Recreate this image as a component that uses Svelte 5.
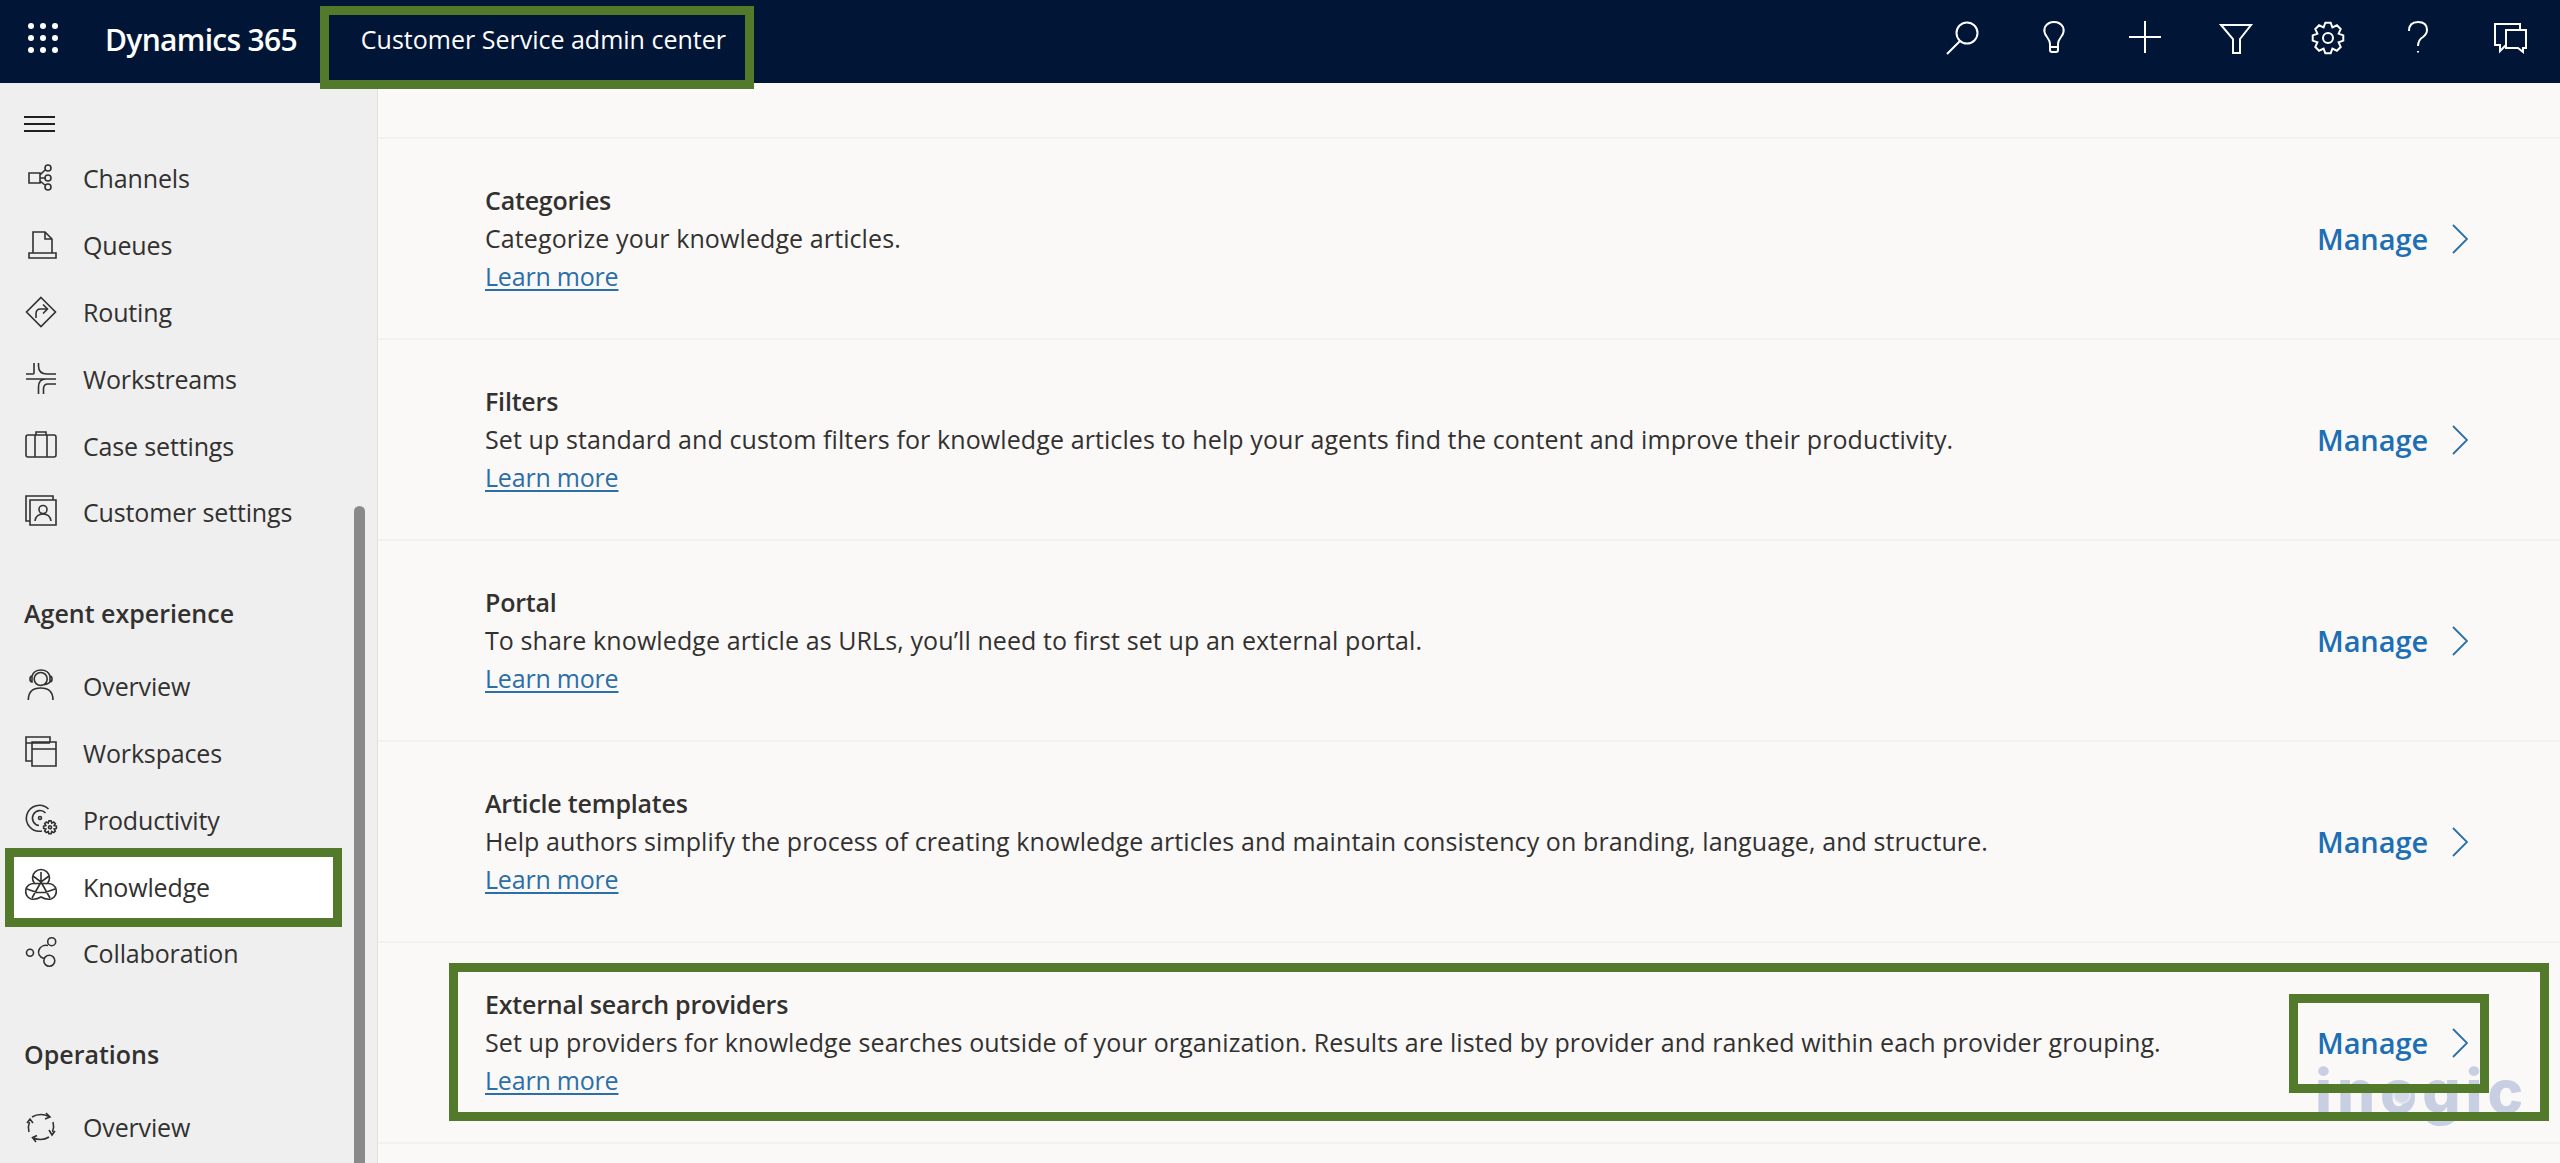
<script>
	const c = (x, y, r) => `M${x - r} ${y}a${r} ${r} 0 1 0 ${2 * r} 0a${r} ${r} 0 1 0 ${-2 * r} 0z`;
	const box = (x, y, w, h) => `M${x} ${y}h${w}v${h}h${-w}z`;

	function gear(cx, cy, ro, ri, n) {
		let d = '';
		const step = (Math.PI * 2) / n;
		for (let i = 0; i < n; i++) {
			const a = i * step;
			const pts = [
				[ri, a - step * 0.5],
				[ro, a - step * 0.22],
				[ro, a + step * 0.22]
			];
			for (const [r, t] of pts) {
				d += `${d ? 'L' : 'M'}${(cx + r * Math.cos(t)).toFixed(2)} ${(cy + r * Math.sin(t)).toFixed(2)}`;
			}
		}
		return d + 'z';
	}

	const nav = {
		channels:
			box(4, 11, 11, 10) + c(23, 6, 3) + c(23, 16, 3) + c(23, 25, 3) + 'M15 13L20.5 7.5M15 16H20M15 19L20.5 23.5',
		queues: 'M8 24V3H20L27 10V24M20 3V10H27' + box(4, 24, 27, 5),
		routing: 'M16 1.5L30.5 16L16 30.5L1.5 16zM11 22V18Q11 13 15.5 13H22M18 8.5L22.5 13L18 17.5',
		workstreams:
			'M1 11H8Q9 11 9 10V0M13.5 0V3Q13.5 11 22 11H31M1 16H31M13.5 31V24Q13.5 16 21 16M18.5 31V26Q18.5 21 23 21H31',
		case: 'M3 5H29Q31 5 31 7V25Q31 27 29 27H3Q1 27 1 25V7Q1 5 3 5zM10 5V27M22 5V27M11 5V2H21V5',
		customer:
			'M5 25H1V0H28V4' + box(5, 4, 26, 25) + c(18, 13.5, 4) + 'M10 25Q11 18 18 18Q25 18 26 25',
		agent:
			c(15.7, 9, 6.5) +
			'M3.3 30Q3.3 18 15.7 18Q28 18 28 30M7 6V12Q5 12 5 9Q5 6 7 6Q9 0 16 0Q23 0 25 6V12Q27 12 27 9Q27 6 25 6M25 12Q22 15 16 15',
		workspaces: 'M7 24H1V0H25V5M1 6H25' + box(7, 5, 24, 24) + 'M7 12H31',
		productivity:
			'M23.5 5A13 13 0 1 0 17 27M20.5 9A7.5 7.5 0 1 0 14 21.5' +
			c(15, 14, 1.5) +
			gear(25, 23.3, 6.5, 4.5, 8) +
			c(25, 23.3, 1.5),
		knowledge:
			'M9.5 12.5A8.5 8.5 0 1 1 22.5 12.5A8 8 0 0 1 26 28Q21 29 16 26Q11 29 6 28A8 8 0 0 1 9.5 12.5z' +
			'M16 1V11M8 5L16 11L24 5M9.5 12.5H22.5M16 11L7 27M16 11L25 27M2 18L12 21.5M30 18L20 21.5M11 21.5H21',
		collab: c(5, 15.7, 3.5) + c(26.7, 4.7, 4) + c(24.3, 23.7, 5.5) + 'M23 8.5C14 7 9 18 19 21.5',
		ops: 'M7 6Q11 3.5 16 3.5Q20 3.5 24 5.5M21 2L25 6L20 8M28 11Q29.5 16 27.5 21M24 19L27 24L30 20M24 26Q20 28.5 15.7 28.5Q11 28.5 9 27M12 24.5L7.5 26.5L11 31M4 21Q2.5 16 4.5 11M2 12L5 8L8 12'
	};

	const groups = [
		{
			items: [
				['Channels', 'channels'],
				['Queues', 'queues'],
				['Routing', 'routing'],
				['Workstreams', 'workstreams'],
				['Case settings', 'case'],
				['Customer settings', 'customer']
			]
		},
		{
			title: 'Agent experience',
			items: [
				['Overview', 'agent'],
				['Workspaces', 'workspaces'],
				['Productivity', 'productivity'],
				['Knowledge', 'knowledge'],
				['Collaboration', 'collab']
			]
		},
		{ title: 'Operations', items: [['Overview', 'ops']] }
	];

	const top = [
		c(20, 12, 10.5) + 'M13 20L0 33',
		'M12 26V23Q12 20 9 16Q5 11 7 6Q10 1 16 1Q22 1 25 6Q27 11 23 16Q20 20 20 23V26zM12 26V29Q12 31 14 31H18Q20 31 20 29V26',
		'M0 16H32M16 0V32',
		'M1 4H31L20 18V32H13V18z',
		gear(16, 17, 15.5, 11.5, 8) + c(16, 17, 5),
		'M6 10Q6 1 15 1Q24 1 24 9Q24 13 20 16Q15 19 15 25M15 30V31.5',
		'M26 9V3H1V24H6L6 30L12 24M12 9H32V27H29V31L24 27H12z'
	];

	const rows = [
		['Categories', 'Categorize your knowledge articles.'],
		['Filters', 'Set up standard and custom filters for knowledge articles to help your agents find the content and improve their productivity.'],
		['Portal', 'To share knowledge article as URLs, you’ll need to first set up an external portal.'],
		['Article templates', 'Help authors simplify the process of creating knowledge articles and maintain consistency on branding, language, and structure.'],
		['External search providers', 'Set up providers for knowledge searches outside of your organization. Results are listed by provider and ranked within each provider grouping.']
	];
</script>

<div class="page">
	<header class="topbar">
		<div class="waffle">
			{#each Array(9) as _}<i></i>{/each}
		</div>
		<span class="brand">Dynamics 365</span>
		<div class="app-title">
			<span>Customer Service admin center</span>
			<div class="mark"></div>
		</div>
		<div class="actions">
			{#each top as d}
				<span class="action">
					<svg viewBox="0 0 32 34" width="32" height="34"><path {d} /></svg>
				</span>
			{/each}
		</div>
	</header>

	<div class="main">
		<aside class="sidebar">
			<div class="burger"><i></i><i></i><i></i></div>
			{#each groups as group}
				<div class="group">
					{#if group.title}<h3>{group.title}</h3>{/if}
					{#each group.items as [label, icon]}
						<div class="item" class:active={label === 'Knowledge'}>
							{#if label === 'Knowledge'}<div class="mark fill"></div>{/if}
							<svg viewBox="0 0 32 32" width="32" height="32"><path d={nav[icon]} /></svg>
							<span>{label}</span>
						</div>
					{/each}
				</div>
			{/each}
			<div class="thumb"></div>
		</aside>

		<main class="content">
			<div class="lead"></div>
			{#each rows as [title, desc], i}
				<section class="row">
					{#if i === 4}<div class="mark"></div>{/if}
					<div class="text">
						<h4>{title}</h4>
						<p>{desc}</p>
						<span class="learn">Learn more</span>
					</div>
					<div class="manage">
						{#if i === 4}<div class="mark"></div>{/if}
						<span>Manage</span>
						<svg viewBox="0 0 16 30" width="16" height="30"><path d="M1 1L15 15L1 29" /></svg>
					</div>
				</section>
			{/each}
			<div class="watermark">in<span class="ring">o</span>gic</div>
		</main>
	</div>
</div>

<style>
	:global(body) {
		margin: 0;
		background: #faf9f8;
	}

	.page {
		height: 1163px;
		overflow: hidden;
		font-family: 'Open Sans', 'Noto Sans', sans-serif;
		color: #323130;
	}

	.topbar {
		height: 83px;
		background: #011637;
		color: #fff;
		display: flex;
		align-items: center;
		padding-left: 28px;
		position: relative;
		z-index: 3;
	}

	.waffle {
		display: grid;
		grid-template-columns: repeat(3, 6px);
		gap: 6px;
		width: 30px;
		margin-top: -8px;
	}

	.waffle i {
		width: 6px;
		height: 6px;
		border-radius: 50%;
		background: #fff;
	}

	.brand {
		margin-left: 47px;
		font-size: 30px;
		font-weight: 600;
		letter-spacing: -0.7px;
		margin-top: -4px;
	}

	.app-title {
		position: relative;
		margin-left: 64px;
		font-size: 25px;
		letter-spacing: 0;
		margin-top: -5px;
	}

	.app-title .mark {
		left: -41px;
		right: -28px;
		top: -16px;
		bottom: -33px;
	}

	.actions {
		margin-left: auto;
		display: flex;
		padding-right: 4px;
		margin-top: -7px;
	}

	.action {
		width: 91.3px;
		display: flex;
		justify-content: center;
	}

	.action svg {
		fill: none;
		stroke: #fff;
		stroke-width: 2;
		overflow: visible;
	}

	.mark {
		position: absolute;
		border: 9px solid #537a2b;
		box-sizing: border-box;
		pointer-events: none;
		z-index: 2;
	}

	.main {
		display: flex;
		height: 1080px;
	}

	.sidebar {
		width: 377px;
		flex: none;
		background: #efefef;
		border-right: 1px solid #e2e0de;
		position: relative;
		overflow: hidden;
	}

	.burger {
		display: flex;
		flex-direction: column;
		gap: 5px;
		width: 31px;
		padding: 33px 0 0 24px;
		height: 29px;
	}

	.burger i {
		height: 2px;
		background: #201f1e;
	}

	.group {
		margin-bottom: 34px;
	}

	.group h3 {
		margin: 0 0 7px 24px;
		height: 66px;
		line-height: 66px;
		font-size: 25px;
		font-weight: 600;
		letter-spacing: 0;
		color: #323130;
	}

	.group:last-of-type h3 {
		margin-top: 0;
	}

	.item {
		height: 66.8px;
		display: flex;
		align-items: center;
		gap: 26px;
		padding-left: 25px;
		font-size: 25px;
		letter-spacing: -0.15px;
		position: relative;
	}

	.item svg {
		flex: none;
		fill: none;
		stroke: #323130;
		stroke-width: 1.6;
		overflow: visible;
		position: relative;
		z-index: 3;
	}

	.item span {
		position: relative;
		z-index: 3;
	}

	.mark.fill {
		background: #fff;
		left: 5px;
		right: 35px;
		top: -5px;
		bottom: -7px;
	}

	.thumb {
		position: absolute;
		left: 354px;
		top: 423px;
		bottom: -10px;
		width: 11px;
		border-radius: 6px;
		background: #8a8a8a;
	}

	.content {
		flex: 1;
		min-width: 0;
		position: relative;
		background: #faf9f8;
	}

	.lead {
		height: 56px;
		border-bottom: 2px solid #f3f2f1;
		box-sizing: border-box;
	}

	.row {
		position: relative;
		height: 201px;
		box-sizing: border-box;
		border-bottom: 2px solid #f3f2f1;
		display: flex;
		align-items: center;
		justify-content: space-between;
		padding: 0 92px 0 107px;
	}

	.row > .mark {
		left: 71px;
		right: 11px;
		top: 20px;
		bottom: 21px;
	}

	.text {
		display: flex;
		flex-direction: column;
		line-height: 38px;
		font-size: 25px;
		letter-spacing: 0.1px;
		margin-top: -2px;
	}

	.text h4 {
		margin: 0;
		font-size: 25px;
		font-weight: 600;
		letter-spacing: -0.2px;
	}

	.text p {
		margin: 0;
	}

	.learn {
		color: #2b6fa8;
		letter-spacing: -0.2px;
		text-decoration: underline;
		text-underline-offset: 3px;
	}

	.manage {
		position: relative;
		display: flex;
		align-items: center;
		gap: 24px;
		color: #1c6fb5;
		font-size: 29px;
		font-weight: 600;
		letter-spacing: -0.1px;
	}

	.manage svg {
		fill: none;
		stroke: #2b6fa8;
		stroke-width: 1.8;
	}

	.manage .mark {
		left: -28px;
		right: -21px;
		top: -29px;
		bottom: -31px;
	}

	.watermark {
		position: absolute;
		left: 1937px;
		top: 973px;
		font-family: Inter, sans-serif;
		font-size: 60px;
		line-height: 70px;
		font-weight: 800;
		letter-spacing: 5px;
		color: #c9cfe3;
		z-index: 1;
	}

	.ring {
		position: relative;
	}

	.ring::after {
		content: '';
		position: absolute;
		left: 13px;
		top: 31px;
		width: 14px;
		height: 14px;
		border: 2px solid #e2e5ef;
		border-radius: 50%;
		background: #d3d8e8;
	}
</style>
